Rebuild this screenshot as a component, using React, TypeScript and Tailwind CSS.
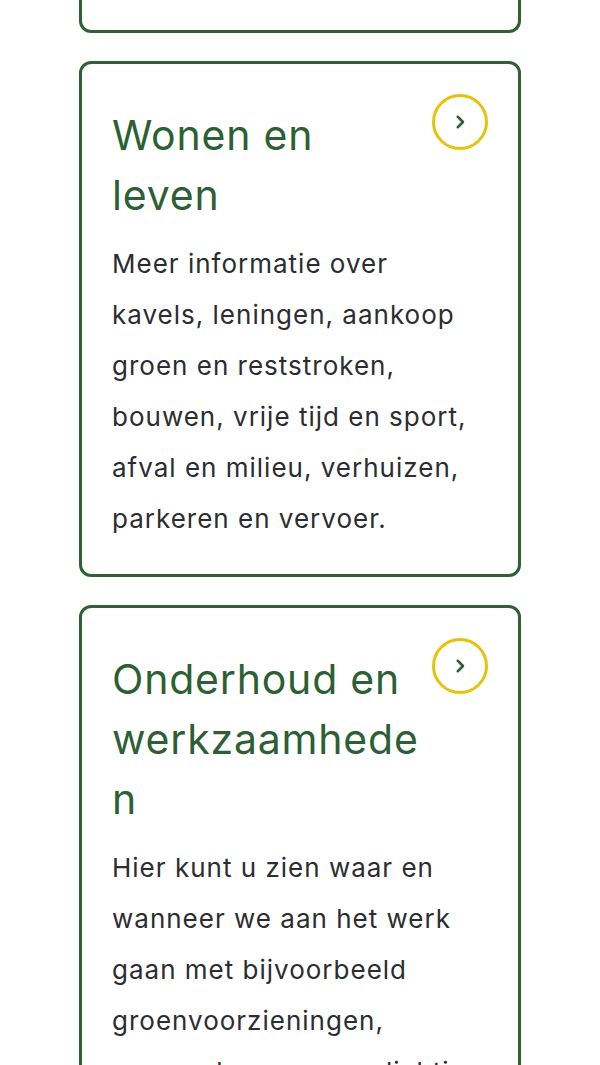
import React from "react";

const cards = [
  {
    title: "Wonen en leven",
    text: "Meer informatie over kavels, leningen, aankoop groen en reststroken, bouwen, vrije tijd en sport, afval en milieu, verhuizen, parkeren en vervoer.",
  },
  {
    title: "Onderhoud en werkzaamheden",
    text: "Hier kunt u zien waar en wanneer we aan het werk gaan met bijvoorbeeld groenvoorzieningen, wegen, bruggen, verlichting en riolering.",
  },
];

const ChevronCircle = () => (
  <div className="w-[56px] h-[56px] shrink-0 rounded-full border-[3px] border-[#e8c10c] flex items-center justify-center">
    <svg width="18" height="18" viewBox="0 0 24 24" fill="none" stroke="#2d5f34" strokeWidth="3.4" strokeLinecap="round" strokeLinejoin="round">
      <path d="M9 5l7 7-7 7" />
    </svg>
  </div>
);

export default function App() {
  return (
    <div className="min-h-[1065px] bg-white px-[79px] flex flex-col gap-[28px] font-['Inter',sans-serif]">
      <div className="h-[33px] border-[3px] border-t-0 border-[#2e6235] rounded-b-[12px]" />
      {cards.map((card) => (
        <div
          key={card.title}
          className="border-[3px] border-[#2e6235] rounded-[12px] px-[30px] pt-[30px] pb-[30px]"
        >
          <div className="flex items-start justify-between gap-[6px]">
            <h2 className="mt-[11px] w-[312px] text-[41px] leading-[60px] text-[#2d5f34] [overflow-wrap:anywhere] tracking-[0.8px]">
              {card.title}
            </h2>
            <ChevronCircle />
          </div>
          <p className="mt-[13px] text-[26px] leading-[51px] text-[#2b2d31] tracking-[1px]">
            {card.text}
          </p>
        </div>
      ))}
    </div>
  );
}
